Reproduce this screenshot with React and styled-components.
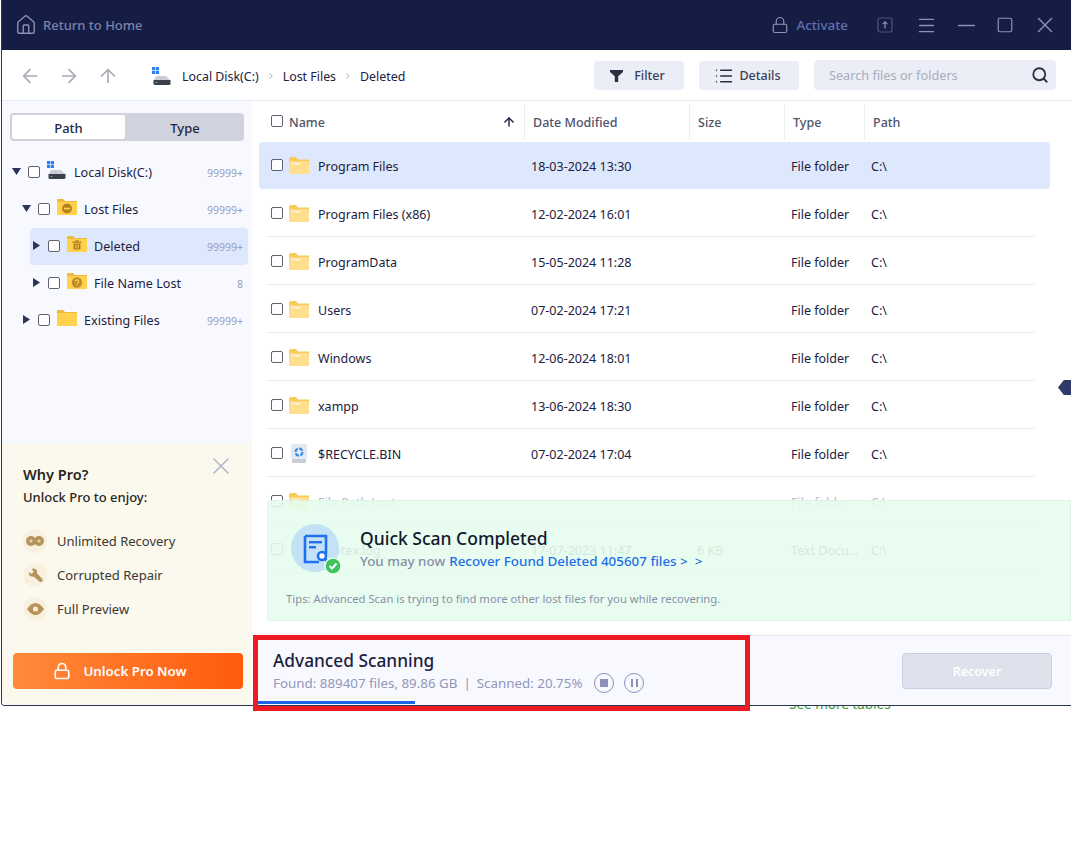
import React from "react";
import styled, { createGlobalStyle } from "styled-components";
import { House, Lock, Menu, Minus, Square, X, ArrowLeft, ArrowRight, ArrowUp, ChevronRight, Search, List } from "lucide-react";

const Global = createGlobalStyle`
  html, body { margin: 0; padding: 0; background: #fff; }
  * { box-sizing: border-box; }
  body { font-family: "Noto Sans", "Open Sans", sans-serif; color: #1c2140; overflow: hidden; }
  svg { flex: none; }
`;

const Page = styled.div`
  position: relative;
  width: 1072px;
  height: 865px;
  overflow: hidden;
`;
const Win = styled.div`
  margin-left: 1px;
  width: 1070px;
  height: 706px;
  display: flex;
  flex-direction: column;
  overflow: hidden;
  background: #fff;
  border-left: 1px solid #2c3454;
  border-bottom: 1px solid #2c3454;
  border-bottom-left-radius: 4px;
`;
const Peek = styled.div`
  height: 4px;
  overflow: hidden;
  padding-left: 789px;
  font-size: 13.5px;
  line-height: 14px;
  color: #3d9a45;
`;
const PeekText = styled.div`
  margin-top: -9px;
`;

/* title bar */
const TitleBar = styled.header`
  height: 50px;
  flex: none;
  display: flex;
  align-items: center;
  background: #151d45;
  padding: 0 17px 0 13px;
`;
const HomeLink = styled.div`
  display: flex;
  align-items: center;
  gap: 6px;
  font-size: 13px;
  font-weight: 500;
  color: #7a83ab;
  svg { color: #8b92b5; }
`;
const Spacer = styled.div`
  flex: 1;
`;
const Activate = styled.div`
  display: flex;
  align-items: center;
  gap: 7px;
  font-size: 13.4px;
  font-weight: 500;
  color: #6171b0;
  margin-right: 28px;
  svg { color: #8b92b5; }
`;
const WinBtn = styled.div`
  display: flex;
  align-items: center;
  justify-content: center;
  width: 18px;
  margin-left: ${p => p.$gap}px;
  color: ${p => p.$color || "#8b92b5"};
`;

/* tool bar */
const ToolBar = styled.div`
  height: 51px;
  flex: none;
  display: flex;
  align-items: center;
  padding: 0 15px 0 18px;
  border-bottom: 1px solid #e3eef0;
  background: #fff;
`;
const NavBtn = styled.div`
  width: 20px;
  margin-top: 2px;
  display: flex;
  justify-content: center;
  margin-right: 19px;
  color: #a6a9b6;
`;
const Crumbs = styled.div`
  display: flex;
  align-items: center;
  margin: 2px 0 0 15px;
  font-size: 12.4px;
  color: #1c2140;
`;
const CrumbText = styled.span`
  margin-left: ${p => p.$gap || 0}px;
`;
const CrumbSep = styled.span`
  display: flex;
  width: 24px;
  justify-content: center;
  color: #9a9dab;
`;
const ToolBtn = styled.div`
  height: 29px;
  width: ${p => p.$w}px;
  margin-right: 15px;
  margin-top: 1px;
  padding-right: 3px;
  display: flex;
  align-items: center;
  justify-content: center;
  gap: ${p => p.$gap}px;
  background: #eceef7;
  border-radius: 4px;
  font-size: 12.5px;
  font-weight: 500;
  color: #3a3f55;
  svg { color: #2b2f40; }
`;
const SearchBox = styled.div`
  width: 242px;
  height: 30px;
  display: flex;
  align-items: center;
  justify-content: space-between;
  padding: 0 7px 0 15px;
  background: #eceef7;
  border-radius: 4px;
  font-size: 12.7px;
  color: #a9acbb;
  svg { color: #2b2f40; }
`;

/* body */
const Body = styled.div`
  flex: 1;
  min-height: 0;
  display: flex;
`;
const Side = styled.aside`
  width: 250px;
  flex: none;
  display: flex;
  flex-direction: column;
  background: #f8f9ff;
`;
const Tabs = styled.div`
  margin: 12px 8px 0 8px;
  height: 28px;
  display: flex;
  padding: 2px;
  border-radius: 4px;
  background: #d0d3de;
  font-size: 13px;
  font-weight: 500;
`;
const Tab = styled.div`
  flex: ${p => (p.$active ? "0 0 113px" : "1")};
  padding: 1px 0 0 ${p => (p.$active ? 0 : 3)}px;
  display: flex;
  align-items: center;
  justify-content: center;
  border-radius: 2px;
  background: ${p => (p.$active ? "#fff" : "transparent")};
  color: #23283f;
`;
const Tree = styled.div`
  flex: 1;
  padding: 13px 4px 0 8px;
`;
const TreeRow = styled.div`
  height: 37px;
  margin-left: ${p => p.$level * 10}px;
  display: flex;
  align-items: center;
  padding-right: 5px;
  border-radius: 4px;
  background: ${p => (p.$active ? "#dee8fc" : "transparent")};
`;
const Caret = styled.span`
  width: 18px;
  flex: none;
  display: flex;
  justify-content: center;
  padding-right: 5px;
  margin-top: -3px;
  color: #2a3358;
`;
const Check = styled.span`
  width: 12px;
  height: 12px;
  flex: none;
  background: #fff;
  border: 1px solid #5f6273;
  border-radius: 2px;
  margin-top: -2px;
`;
const TreeIcon = styled.span`
  width: 20px;
  flex: none;
  margin-left: 7px;
  margin-top: -5px;
  display: flex;
`;
const TreeLabel = styled.span`
  flex: 1;
  margin-left: 7px;
  font-size: 12.6px;
  color: #1c2140;
`;
const TreeCount = styled.span`
  font-size: 10.5px;
  color: #9a9dbb;
`;

const Promo = styled.section`
  height: 261px;
  flex: none;
  width: 251px;
  display: flex;
  flex-direction: column;
  padding: 14px 10px 16px 11px;
  background: #fbf8ee;
`;
const PromoHead = styled.div`
  display: flex;
  justify-content: space-between;
  align-items: flex-start;
  padding: 0 14px 0 10px;
`;
const PromoTitle = styled.div`
  margin-top: 6px;
  font-size: 14.5px;
  font-weight: 600;
  line-height: 20px;
  color: #2a2620;
`;
const PromoSub = styled.div`
  margin-top: 4px;
  font-size: 13px;
  font-weight: 500;
  line-height: 18px;
  color: #2a2620;
`;
const PromoClose = styled.div`
  color: #a9aec6;
  margin: -6px -6px 0 0;
  height: 16px;
`;
const Perks = styled.div`
  margin: 23px 0 0 10px;
  display: flex;
  flex-direction: column;
  gap: 10px;
  flex: 1;
`;
const Perk = styled.div`
  display: flex;
  align-items: center;
  gap: 10px;
  font-size: 13px;
  color: #3b3730;
`;
const PerkDot = styled.span`
  width: 24px;
  height: 24px;
  border-radius: 50%;
  background: #f8f1df;
  display: flex;
  align-items: center;
  justify-content: center;
`;
const UnlockBtn = styled.div`
  height: 36px;
  display: flex;
  align-items: center;
  justify-content: center;
  gap: 12px;
  padding-right: 16px;
  border-radius: 4px;
  background: linear-gradient(90deg, #ff8b3b, #ff5a0c);
  color: #fff;
  font-size: 13.3px;
  font-weight: 600;
`;

/* main */
const Main = styled.main`
  flex: 1;
  min-width: 0;
  display: flex;
  flex-direction: column;
  background: #fff;
`;
const ListArea = styled.div`
  flex: 1;
  min-height: 0;
  overflow: hidden;
`;
const HeadRow = styled.div`
  height: 40px;
  display: flex;
  align-items: center;
  padding-left: 19px;
  font-size: 12.5px;
  font-weight: 500;
  color: #50546a;
`;
const NameHead = styled.div`
  width: 253px;
  margin-top: 2px;
  display: flex;
  align-items: center;
  svg { color: #1c2140; margin-left: auto; margin-right: 8px; }
`;
const HeadCheck = styled(Check)`
  margin: -2px 6px 0 0;
`;
const HeadCell = styled.div`
  width: ${p => p.$w}px;
  height: 34px;
  margin-top: 2px;
  display: flex;
  align-items: center;
  padding-left: 8px;
  border-left: 1px solid #e6eef0;
`;
const Row = styled.div`
  height: 47px;
  margin: ${p => (p.$active ? "1px 21px -1px 7px" : "0 21px 0 7px")};
  padding: ${p => (p.$active ? "2px" : "4px")} 0 0 12px;
  display: grid;
  grid-template-columns: 18px 29px 213px 166px 94px 80px 1fr;
  align-items: center;
  border-radius: 4px;
  font-size: 12.5px;
  color: ${p => (p.$faded ? "#b6bac6" : "#1c2140")};
  background: ${p => (p.$active ? "#dee8fc" : "transparent")};
`;
const RowCheck = styled(Check)`
  margin-top: -3px;
`;
const RowIcon = styled.span`
  display: flex;
  margin-top: -3px;
`;
const RowRule = styled.div`
  height: 1px;
  margin: 0 36px 0 15px;
  background: ${p => (p.$hidden ? "transparent" : "#e4e7f4")};
`;

const Footer = styled.footer`
  height: 70px;
  flex: none;
  display: flex;
  align-items: stretch;
  justify-content: space-between;
  background: #f8f9ff;
  border-top: 1px solid #e4e6ee;
`;
const ScanInfo = styled.div`
  width: 497px;
  padding: 13px 0 0 21px;
  display: flex;
  flex-direction: column;
`;
const ScanTitle = styled.div`
  font-size: 17.3px;
  font-weight: 500;
  line-height: 24px;
  color: #1c2140;
`;
const ScanLine = styled.div`
  display: flex;
  align-items: center;
  font-size: 13.35px;
  line-height: 20px;
  color: #9197b8;
`;
const ScanSep = styled.span`
  margin: 0 6px;
`;
const RoundBtn = styled.span`
  width: 20px;
  height: 20px;
  margin-left: ${p => p.$gap}px;
  border-radius: 50%;
  border: 1px solid #8d90bb;
  display: flex;
  align-items: center;
  justify-content: center;
  gap: 3px;
`;
const StopMark = styled.span`
  width: 8px;
  height: 8px;
  background: #8d90bb;
`;
const PauseMark = styled.span`
  width: 2px;
  height: 8px;
  background: #8d90bb;
`;
const Progress = styled.div`
  position: absolute;
  left: 258px;
  top: 701px;
  width: 157px;
  height: 3px;
  background: #1c64e6;
`;
const RecoverBtn = styled.div`
  width: 150px;
  height: 36px;
  margin: 17px 19px 0 0;
  display: flex;
  align-items: center;
  justify-content: center;
  border: 1px solid #c8cfe2;
  border-radius: 4px;
  background: #dfe1ec;
  color: #fff;
  font-size: 12.5px;
  font-weight: 600;
`;

/* overlays */
const Toast = styled.div`
  position: absolute;
  left: 267px;
  top: 500px;
  width: 804px;
  height: 121px;
  padding: 23px 0 0 23px;
  display: flex;
  flex-direction: column;
  border-radius: 4px 0 0 4px;
  background: rgba(230, 253, 238, 0.9);
  border: 1px solid rgba(222, 240, 226, 0.7);
`;
const ToastTop = styled.div`
  display: flex;
  gap: 19px;
`;
const ToastTitle = styled.div`
  margin-top: 1px;
  font-size: 17.5px;
  font-weight: 500;
  line-height: 26px;
  color: #14182c;
`;
const ToastLine = styled.div`
  font-size: 13.4px;
  font-weight: 500;
  line-height: 20px;
  color: #878da6;
`;
const ToastLink = styled.span`
  color: #1e6ee8;
  margin-left: 4px;
`;
const ToastTip = styled.div`
  margin: 17px 0 0 -5px;
  font-size: 11.3px;
  line-height: 16px;
  color: #8b90ab;
`;
const Annotation = styled.div`
  position: absolute;
  left: 253px;
  top: 635px;
  width: 497px;
  height: 76px;
  border: 5px solid #ed1c24;
`;
const SideHandle = styled.div`
  position: absolute;
  left: 1058px;
  top: 380px;
  width: 13px;
  height: 15px;
  background: #2e3a68;
  clip-path: polygon(0 50%, 45% 0, 100% 0, 100% 100%, 45% 100%);
`;

/* drawings */
const DiskIcon = () => (
  <svg width="20" height="19" viewBox="0 0 20 19">
    <g fill="#2f80f5">
      <rect x="0" y="0" width="3.2" height="3.2" />
      <rect x="3.8" y="0" width="3.2" height="3.2" />
      <rect x="0" y="3.8" width="3.2" height="3.2" />
      <rect x="3.8" y="3.8" width="3.2" height="3.2" />
    </g>
    <path d="M4 9 L14 9 L18 13 L2 13 Z" fill="#c9ced6" />
    <path d="M1.5 13 H18.5 V16.5 Q18.5 18 17 18 H3 Q1.5 18 1.5 16.5 Z" fill="#3a3f4b" />
    <rect x="3.5" y="15" width="2" height="1" fill="#4fc36b" />
  </svg>
);
const FolderRow = () => (
  <svg width="20" height="17" viewBox="0 0 20 17">
    <path d="M0 2 Q0 0 2 0 H6 Q7 0 8 1.2 L9 2.5 H20 V15 Q20 17 18 17 H2 Q0 17 0 15 Z" fill="#fbc95a" />
    <rect x="0" y="4" width="20" height="13" rx="1.5" fill="#ffdf8e" />
    <rect x="3" y="6" width="8" height="1.6" fill="#fff6dc" />
  </svg>
);
const TreeFolder = ({ mark }) => (
  <svg width="20" height="16" viewBox="0 0 20 16">
    <path d="M0 1 Q0 0 1 0 H6 L8 2 H20 V16 H0 Z" fill="#eeb93f" />
    <rect x="0" y="3" width="20" height="13" fill="#ffd24d" />
    {mark === "minus" && (
      <g>
        <circle cx="10" cy="9.5" r="5" fill="#b8801f" />
        <rect x="7" y="8.7" width="6" height="1.7" fill="#ffd24d" />
      </g>
    )}
    {mark === "trash" && (
      <g fill="#b07a18">
        <rect x="5.5" y="5.5" width="9" height="1.3" />
        <rect x="8.5" y="4.2" width="3" height="1.3" />
        <path d="M6.5 7.5 H13.5 V13.5 H6.5 Z" />
        <rect x="8.4" y="8.5" width="1" height="4" fill="#ffd24d" />
        <rect x="10.6" y="8.5" width="1" height="4" fill="#ffd24d" />
      </g>
    )}
    {mark === "help" && (
      <g>
        <circle cx="10" cy="9.5" r="5.2" fill="#c08a26" />
        <path d="M8.2 8.3 Q8.4 6.8 10 6.8 Q11.7 6.8 11.7 8.2 Q11.7 9.2 10.3 9.8 V11" stroke="#ffd24d" strokeWidth="1.2" fill="none" />
        <rect x="9.7" y="11.5" width="1.1" height="1.1" fill="#ffd24d" />
      </g>
    )}
  </svg>
);
const RecycleIcon = () => (
  <svg width="16" height="19" viewBox="0 0 16 19" style={{ marginLeft: 2 }}>
    <rect x="0" y="0" width="16" height="15" rx="1.5" fill="#e4e9f1" />
    <rect x="1" y="15" width="14" height="4" fill="#c7ccd6" />
    <circle cx="8" cy="8" r="3.5" fill="none" stroke="#2c8ce6" strokeWidth="2" strokeDasharray="4 1.4" />
  </svg>
);
const CaretDown = () => (
  <svg width="9" height="7" viewBox="0 0 9 7"><path d="M0 0 H9 L4.5 7 Z" fill="currentColor" /></svg>
);
const CaretRight = () => (
  <svg width="7" height="9" viewBox="0 0 7 9"><path d="M0 0 L7 4.5 L0 9 Z" fill="currentColor" /></svg>
);
const UploadBox = () => (
  <svg width="16" height="16" viewBox="0 0 16 16" fill="none" stroke="#4b557f" strokeWidth="1.2">
    <rect x="1" y="1" width="14" height="14" rx="2" />
    <path d="M8 11.5 V5 M5.7 7.2 L8 4.8 L10.3 7.2" stroke="#8b92b5" />
  </svg>
);
const Funnel = () => (
  <svg width="13" height="12" viewBox="0 0 13 12"><path d="M0 0 H13 V2 L8.2 6.2 V12 H4.8 V6.2 L0 2 Z" fill="currentColor" /></svg>
);
const gold = "#b5935a";
const LinkPerk = () => (
  <svg width="18" height="10" viewBox="0 0 18 10">
    <circle cx="5" cy="5" r="5" fill={gold} />
    <circle cx="13" cy="5" r="5" fill={gold} />
    <circle cx="5" cy="5" r="1.6" fill="#e5d5b2" />
    <circle cx="13" cy="5" r="1.6" fill="#e5d5b2" />
  </svg>
);
const WrenchPerk = () => (
  <svg width="15" height="15" viewBox="0 0 15 15">
    <path d="M1 4 L3.5 6 L5.8 3.6 L3.6 1 Q7 -0.4 8.6 2 Q9.4 3.6 8.8 5.2 L14.4 11 Q15 12 14 13.4 Q12.8 14.6 11.6 13.8 L5.6 8.6 Q3.6 9 2.2 8 Q0.4 6.4 1 4 Z" fill={gold} />
  </svg>
);
const EyePerk = () => (
  <svg width="17" height="12" viewBox="0 0 17 12">
    <path d="M0 6 Q4 0 8.5 0 Q13 0 17 6 Q13 12 8.5 12 Q4 12 0 6 Z" fill={gold} />
    <circle cx="8.5" cy="6" r="2.6" fill="#f3ead4" />
  </svg>
);
const ScanBadge = () => (
  <svg width="50" height="50" viewBox="0 0 50 50">
    <circle cx="24" cy="24" r="24" fill="#c4e2f6" />
    <path d="M14 12 H35 V30 M14 12 V38 H28" fill="none" stroke="#1f6ff0" strokeWidth="2.6" />
    <rect x="18" y="17" width="13" height="2.4" fill="#1f6ff0" />
    <rect x="18" y="22" width="7" height="2.4" fill="#1f6ff0" />
    <circle cx="31" cy="32" r="4" fill="#fff" stroke="#1f6ff0" strokeWidth="2.6" />
    <path d="M34 35 L37 38" stroke="#1f6ff0" strokeWidth="2.6" />
    <circle cx="42" cy="42" r="8" fill="#3ec35d" stroke="#eafbf0" strokeWidth="1.4" />
    <path d="M38.5 42 L41 44.5 L45.5 39.5" fill="none" stroke="#fff" strokeWidth="2" />
  </svg>
);

const tree = [
  { level: 0, open: true, label: "Local Disk(C:)", count: "99999+", icon: <DiskIcon /> },
  { level: 1, open: true, label: "Lost Files", count: "99999+", icon: <TreeFolder mark="minus" /> },
  { level: 2, active: true, label: "Deleted", count: "99999+", icon: <TreeFolder mark="trash" /> },
  { level: 2, label: "File Name Lost", count: "8", icon: <TreeFolder mark="help" /> },
  { level: 1, label: "Existing Files", count: "99999+", icon: <TreeFolder /> },
];

const files = [
  { name: "Program Files", date: "18-03-2024 13:30", active: true },
  { name: "Program Files (x86)", date: "12-02-2024 16:01" },
  { name: "ProgramData", date: "15-05-2024 11:28" },
  { name: "Users", date: "07-02-2024 17:21" },
  { name: "Windows", date: "12-06-2024 18:01" },
  { name: "xampp", date: "13-06-2024 18:30" },
  { name: "$RECYCLE.BIN", date: "07-02-2024 17:04", recycle: true },
  { name: "File Path Lost", date: "", faded: true },
  { name: "bootex.log", date: "17-07-2023 11:47", size: "6 KB", type: "Text Docu...", log: true },
];

export default function App() {
  return (
    <Page>
      <Global />
      <Win>
        <TitleBar>
          <HomeLink>
            <House size={22} strokeWidth={1.5} />
            Return to Home
          </HomeLink>
          <Spacer />
          <Activate>
            <Lock size={18} strokeWidth={1.6} />
            Activate
          </Activate>
          <WinBtn $gap={0}><UploadBox /></WinBtn>
          <WinBtn $gap={23}><Menu size={21} strokeWidth={1.5} /></WinBtn>
          <WinBtn $gap={22}><Minus size={27} strokeWidth={1.3} /></WinBtn>
          <WinBtn $gap={21}><Square size={18} strokeWidth={1.6} /></WinBtn>
          <WinBtn $gap={22}><X size={26} strokeWidth={1.3} /></WinBtn>
        </TitleBar>
        <ToolBar>
          <NavBtn><ArrowLeft size={22} strokeWidth={1.8} /></NavBtn>
          <NavBtn><ArrowRight size={22} strokeWidth={1.8} /></NavBtn>
          <NavBtn><ArrowUp size={22} strokeWidth={1.8} /></NavBtn>
          <Crumbs>
            <DiskIcon />
            <CrumbText $gap={10}>Local Disk(C:)</CrumbText>
            <CrumbSep><ChevronRight size={10} strokeWidth={2} /></CrumbSep>
            <CrumbText>Lost Files</CrumbText>
            <CrumbSep><ChevronRight size={10} strokeWidth={2} /></CrumbSep>
            <CrumbText>Deleted</CrumbText>
          </Crumbs>
          <Spacer />
          <ToolBtn $w={90} $gap={11}><Funnel />Filter</ToolBtn>
          <ToolBtn $w={100} $gap={5}><List size={20} strokeWidth={1.8} />Details</ToolBtn>
          <SearchBox>
            Search files or folders
            <Search size={18} strokeWidth={2.4} />
          </SearchBox>
        </ToolBar>
        <Body>
          <Side>
            <Tabs>
              <Tab $active>Path</Tab>
              <Tab>Type</Tab>
            </Tabs>
            <Tree>
              {tree.map(t => (
                <TreeRow key={t.label} $level={t.level} $active={t.active}>
                  <Caret>{t.open ? <CaretDown /> : <CaretRight />}</Caret>
                  <Check />
                  <TreeIcon>{t.icon}</TreeIcon>
                  <TreeLabel>{t.label}</TreeLabel>
                  <TreeCount>{t.count}</TreeCount>
                </TreeRow>
              ))}
            </Tree>
            <Promo>
              <PromoHead>
                <div>
                  <PromoTitle>Why Pro?</PromoTitle>
                  <PromoSub>Unlock Pro to enjoy:</PromoSub>
                </div>
                <PromoClose><X size={28} strokeWidth={1.1} /></PromoClose>
              </PromoHead>
              <Perks>
                <Perk><PerkDot><LinkPerk /></PerkDot>Unlimited Recovery</Perk>
                <Perk><PerkDot><WrenchPerk /></PerkDot>Corrupted Repair</Perk>
                <Perk><PerkDot><EyePerk /></PerkDot>Full Preview</Perk>
              </Perks>
              <UnlockBtn><Lock size={18} strokeWidth={2.2} />Unlock Pro Now</UnlockBtn>
            </Promo>
          </Side>
          <Main>
            <ListArea>
              <HeadRow>
                <NameHead>
                  <HeadCheck />
                  Name
                  <ArrowUp size={14} strokeWidth={2.4} />
                </NameHead>
                <HeadCell $w={165}>Date Modified</HeadCell>
                <HeadCell $w={95}>Size</HeadCell>
                <HeadCell $w={80}>Type</HeadCell>
                <HeadCell $w={120}>Path</HeadCell>
              </HeadRow>
              {files.map(f => (
                <React.Fragment key={f.name}>
                  <Row $active={f.active} $faded={f.faded}>
                    <RowCheck />
                    <RowIcon>{f.recycle ? <RecycleIcon /> : f.log ? null : <FolderRow />}</RowIcon>
                    <span>{f.name}</span>
                    <span>{f.date}</span>
                    <span>{f.size || ""}</span>
                    <span>{f.type || "File folder"}</span>
                    <span>C:\</span>
                  </Row>
                  <RowRule $hidden={f.active} />
                </React.Fragment>
              ))}
            </ListArea>
            <Footer>
              <ScanInfo>
                <ScanTitle>Advanced Scanning</ScanTitle>
                <ScanLine>
                  Found: 889407 files, 89.86 GB
                  <ScanSep>|</ScanSep>
                  Scanned: 20.75%
                  <RoundBtn $gap={12}><StopMark /></RoundBtn>
                  <RoundBtn $gap={10}><PauseMark /><PauseMark /></RoundBtn>
                </ScanLine>
              </ScanInfo>
              <RecoverBtn>Recover</RecoverBtn>
            </Footer>
          </Main>
        </Body>
      </Win>
      <Peek><PeekText>See more tables</PeekText></Peek>
      <Toast>
        <ToastTop>
          <ScanBadge />
          <div>
            <ToastTitle>Quick Scan Completed</ToastTitle>
            <ToastLine>You may now<ToastLink>Recover Found Deleted 405607 files &gt;&nbsp; &gt;</ToastLink></ToastLine>
          </div>
        </ToastTop>
        <ToastTip>Tips: Advanced Scan is trying to find more other lost files for you while recovering.</ToastTip>
      </Toast>
      <SideHandle />
      <Progress />
      <Annotation />
    </Page>
  );
}
